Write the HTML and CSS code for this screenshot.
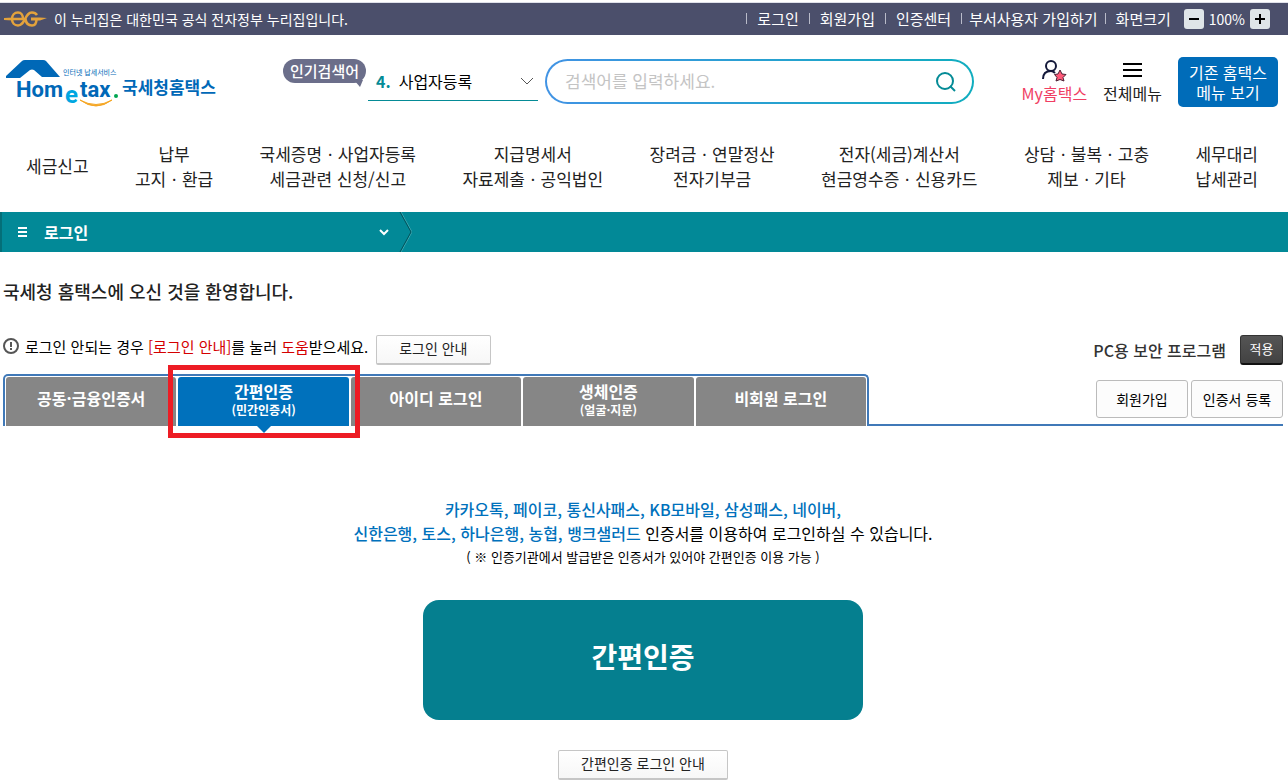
FILE: index.html
```html
<!DOCTYPE html>
<html lang="ko">
<head>
<meta charset="utf-8">
<title>국세청 홈택스</title>
<link rel="stylesheet" href="styles.css">
</head>
<body>
<div class="gov-bar">
  <p class="gov-note">
    <svg class="gov-mark" width="43" height="18" viewBox="0 0 43 18" fill="none" stroke="#e3a23c" stroke-width="2.5" aria-hidden="true">
      <path d="M8 9H19C19 5 17 2.500 14 2.500C10.500 2.500 8 5 8 9C8 13 10.500 15.500 14 15.500C17.500 15.500 19 13 21 9C23 5 24.500 2.500 28 2.500C30.500 2.500 32 3.500 33 5M21.500 9C22 13 24 15.500 28 15.500C31 15.500 32.500 13.500 32.500 9"/>
      <path d="M0 8L9 7.500V10.500L0 10ZM27 7.500H36L43 8L36 10.500H27Z" fill="#e3a23c" stroke="none"/>
    </svg>
    이 누리집은 대한민국 공식 전자정부 누리집입니다.
  </p>
  <nav class="util">
    <a href="#">로그인</a><a href="#">회원가입</a><a href="#">인증센터</a><a href="#" class="tight">부서사용자 가입하기</a><span class="util-label">화면크기</span>
    <button class="zoom-btn" type="button" aria-label="축소"><svg width="20" height="20" viewBox="0 0 20 20" stroke="#000" stroke-width="2"><path d="M5 10H15"/></svg></button>
    <span class="zoom-val">100%</span>
    <button class="zoom-btn" type="button" aria-label="확대"><svg width="20" height="20" viewBox="0 0 20 20" stroke="#000" stroke-width="2"><path d="M5 10H15M10 5V15"/></svg></button>
  </nav>
</div>

<header class="header">
  <a class="logo" href="#" aria-label="Hometax 국세청홈택스">
    <svg width="214" height="54" viewBox="0 0 214 54">
      <path d="M0 23V21L16 6Q17 5 19 5H37Q39 5 40 6L54 22H36L28 15Q26 14 24 15L14 23Z" fill="#0068b7"/>
      <text class="logo-sub" x="57" y="20">인터넷 납세서비스</text>
      <text class="logo-word" x="10" y="42">Hom</text>
      <text class="logo-e" x="59" y="48">e</text>
      <text class="logo-word" x="74" y="42">tax</text>
      <circle cx="110" cy="41" r="2" fill="#00a651"/>
      <path d="M74 45Q90 57 106 45Q90 54 74 45Z" fill="#f5a623" stroke="#f5a623"/>
      <text class="logo-name" x="116" y="39">국세청홈택스</text>
    </svg>
  </a>
  <div class="search">
    <span class="badge">인기검색어
      <svg class="badge-tail" width="9" height="8" viewBox="0 0 9 8"><path d="M0 0H9L6 7Z" fill="#6b6e8a"/></svg>
    </span>
    <button class="keyword" type="button"><b>4.</b><span>사업자등록</span>
      <svg width="14" height="8" viewBox="0 0 14 8" fill="none" stroke="#555"><path d="M1 1L7 7L13 1"/></svg>
    </button>
    <form class="search-box">
      <input type="text" placeholder="검색어를 입력하세요." aria-label="검색어">
      <button type="button" aria-label="검색"><svg width="22" height="22" viewBox="0 0 22 22" fill="none" stroke="#048b96" stroke-width="2"><circle cx="10" cy="10" r="8"/><path d="M15 15L20 20"/></svg></button>
    </form>
  </div>
  <div class="quick">
    <a class="quick-link my" href="#">
      <svg width="28" height="22" viewBox="0 0 28 22"><g fill="none" stroke="#14193a" stroke-width="2"><circle cx="11" cy="6" r="5"/><path d="M3 19C3 14 6 11 11 11C13 11 14 12 15 13"/></g><path d="M20 10L22 14L26 14.500L23 17.500L24 21L20 19.500L16 21L17 17.500L14.500 14.500L18 14Z" fill="#ff5a78" stroke="#4a2034"/></svg>
      <span>My홈택스</span>
    </a>
    <a class="quick-link" href="#">
      <svg width="20" height="22" viewBox="0 0 20 22" stroke="#000" stroke-width="2"><path d="M0 4H19M0 10H19M0 16H19"/></svg>
      <span>전체메뉴</span>
    </a>
    <a class="old-menu" href="#">기존 홈택스<br>메뉴 보기</a>
  </div>
</header>

<nav class="gnb">
  <a href="#">세금신고</a>
  <a href="#">납부<br>고지ㆍ환급</a>
  <a href="#">국세증명ㆍ사업자등록<br>세금관련 신청/신고</a>
  <a href="#">지급명세서<br>자료제출ㆍ공익법인</a>
  <a href="#">장려금ㆍ연말정산<br>전자기부금</a>
  <a href="#">전자(세금)계산서<br>현금영수증ㆍ신용카드</a>
  <a href="#">상담ㆍ불복ㆍ고충<br>제보ㆍ기타</a>
  <a href="#">세무대리<br>납세관리</a>
</nav>

<div class="crumb">
  <button class="crumb-btn" type="button">
    <svg width="10" height="12" viewBox="0 0 10 12" stroke="#fff" stroke-width="2"><path d="M0 2H9M0 6H9M0 10H9"/></svg>
    <span>로그인</span>
    <svg width="10" height="8" viewBox="0 0 10 8" fill="none" stroke="#fff" stroke-width="2"><path d="M1 2L5 6L9 2"/></svg>
  </button>
  <svg width="14" height="40" viewBox="0 0 14 40" fill="none"><path d="M3 0L14 20L3 40" stroke="#3ea7b0"/><path d="M2 0L13 20L2 40" stroke="#04525a"/></svg>
</div>

<main class="main">
  <h1>국세청 홈택스에 오신 것을 환영합니다.</h1>
  <div class="notice">
    <svg class="notice-icon" width="18" height="18" viewBox="0 0 18 18" fill="none" stroke="#555" stroke-width="2"><circle cx="8" cy="9" r="7"/><path d="M8 5V10M8 11V13"/></svg>
    <p>로그인 안되는 경우 <em>[로그인 안내]</em>를 눌러 <em>도움</em>받으세요.</p>
    <button class="btn" type="button">로그인 안내</button>
    <div class="security"><strong>PC용 보안 프로그램</strong><button class="apply" type="button">적용</button></div>
  </div>

  <div class="tab-row">
    <div class="tabs" role="tablist">
      <button class="tab" role="tab" type="button">공동·금융인증서</button>
      <button class="tab two-line active" role="tab" type="button" aria-selected="true">간편인증<small>(민간인증서)</small></button>
      <button class="tab" role="tab" type="button">아이디 로그인</button>
      <button class="tab two-line" role="tab" type="button">생체인증<small>(얼굴·지문)</small></button>
      <button class="tab" role="tab" type="button">비회원 로그인</button>
    </div>
    <div class="tab-side">
      <button class="side-btn" type="button">회원가입</button>
      <button class="side-btn" type="button">인증서 등록</button>
    </div>
  </div>

  <section class="panel">
    <p class="desc"><b>카카오톡, 페이코, 통신사패스, KB모바일, 삼성패스, 네이버,<br>신한은행, 토스, 하나은행, 농협, 뱅크샐러드</b> 인증서를 이용하여 로그인하실 수 있습니다.</p>
    <p class="hint">( ※ 인증기관에서 발급받은 인증서가 있어야 간편인증 이용 가능 )</p>
    <button class="auth" type="button">간편인증</button>
    <button class="btn" type="button">간편인증 로그인 안내</button>
  </section>
</main>
</body>
</html>
```

FILE: styles.css
```css
* { box-sizing: border-box; }
body {
  margin: 0;
  padding-top: 2px;
  background: #fff;
  color: #000;
  font: 16px/24px "Noto Sans CJK KR", sans-serif;
}
a { color: inherit; text-decoration: none; }
p, h1 { margin: 0; }
button { font: inherit; color: inherit; padding: 0; border: 0; background: none; cursor: pointer; white-space: nowrap; }
svg { display: block; flex: none; }

.gov-bar {
  display: flex;
  align-items: center;
  justify-content: space-between;
  height: 33px;
  padding: 0 18px 1px 4px;
  border-top: 1px solid #dfe1ea;
  background: #4b4f6b;
  color: #fff;
}
.gov-note { display: flex; align-items: center; gap: 7px; font-size: 14px; white-space: nowrap; }
.util { display: flex; align-items: center; font-size: 15px; line-height: 20px; white-space: nowrap; }
.util a, .util-label { display: flex; align-items: center; padding-right: 10px; }
.util a::before, .util-label::before { content: ""; width: 1px; height: 11px; margin-right: 10px; background: #b9bbc9; }
.util .tight { padding-right: 7px; }
.util .tight::before { margin-right: 7px; }
.util .util-label { padding-right: 13px; }
.zoom-btn { border-radius: 3px; background: #dfe5e8; }
.zoom-val { padding: 0 5px; font-size: 14px; }

.header {
  display: flex;
  align-items: center;
  height: 92px;
  padding: 1px 10px 0 6px;
}
.logo { flex: none; }
.logo-sub { font-size: 7px; fill: #0068b7; }
.logo-word { font: bold 22px Roboto, sans-serif; fill: #0068b7; }
.logo-e { font: bold 24px Roboto, sans-serif; fill: #00a7e1; }
.logo-name { font-size: 17px; font-weight: 700; fill: #0068b7; }
.search { display: flex; flex: 1; align-items: center; margin-left: 63px; }
.badge {
  position: relative;
  flex: none;
  align-self: flex-start;
  padding: 0 7px;
  border-radius: 12px;
  background: #6b6e8a;
  color: #fff;
  font-size: 15px;
  font-weight: 500;
}
.badge-tail { position: absolute; right: 3px; top: 21px; }
.keyword {
  display: flex;
  flex: none;
  align-items: center;
  gap: 8px;
  width: 170px;
  height: 38px;
  margin: 0 7px 0 2px;
  padding: 0 4px 0 8px;
  border-bottom: 1px solid #048b96;
}
.keyword b { color: #048b96; }
.keyword svg { margin-left: auto; }
.search-box {
  display: flex;
  flex: 1;
  align-items: center;
  height: 45px;
  padding: 0 15px 0 18px;
  border: 2px solid transparent;
  border-radius: 23px;
  background: linear-gradient(#fff, #fff) padding-box, linear-gradient(90deg, #4193e4, #10adbf) border-box;
}
.search-box input { flex: 1; min-width: 0; padding: 0 0 2px; border: 0; outline: 0; background: none; font: inherit; font-size: 17px; }
.search-box input::placeholder { color: #c4c4c4; opacity: 1; }
.quick { display: flex; flex: none; align-items: center; gap: 16px; margin-left: 48px; }
.quick-link { display: flex; flex-direction: column; align-items: center; color: #222; line-height: 22px; }
.my { color: #f03e63; }
.old-menu { width: 100px; padding: 5px 0; border-radius: 5px; background: #006cb9; color: #fff; line-height: 20px; text-align: center; }

.gnb {
  display: flex;
  align-items: center;
  justify-content: space-between;
  height: 85px;
  padding: 0 30px 8px 26px;
  color: #222;
  font-size: 17px;
  line-height: 25px;
  text-align: center;
  white-space: nowrap;
}

.crumb { display: flex; height: 40px; border-left: 2px solid #046f78; background: #028997; color: #fff; }
.crumb-btn { display: flex; align-items: center; gap: 16px; width: 396px; padding: 0 9px 1px 16px; font-weight: 700; }
.crumb-btn svg:last-child { margin-left: auto; }

.main { padding: 25px 5px 0 3px; }
h1 { color: #222; font-size: 18px; font-weight: 500; line-height: 28px; }
.notice { display: flex; align-items: flex-start; margin-top: 30px; }
.notice-icon { margin-top: 2px; }
.notice p { flex: none; margin: 0 8px 0 4px; font-size: 15px; line-height: 24px; }
.notice em { color: #d40000; font-style: normal; }
.btn {
  height: 30px;
  padding: 0 22px 3px;
  border: 1px solid #c6c6c6;
  border-bottom-width: 2px;
  border-radius: 2px;
  background: linear-gradient(#fff, #f7f7f7);
  color: #222;
  font-size: 14px;
}
.security { display: flex; align-items: center; gap: 14px; margin-left: auto; color: #333; }
.security strong { font-weight: 500; }
.apply {
  width: 43px;
  height: 30px;
  padding-bottom: 2px;
  border: 1px solid #333;
  border-bottom: 2px solid #111;
  border-radius: 3px;
  background: linear-gradient(#555, #424242);
  color: #fff;
  font-size: 13px;
}

.tab-row { display: flex; margin-top: 9px; }
.tabs {
  display: grid;
  grid-template-columns: repeat(5, 1fr);
  gap: 2px;
  flex: 0 1 866px;
  height: 52px;
  padding: 1px 1px 0;
  border: 2px solid #4079b8;
  border-bottom: 0;
  border-radius: 5px 5px 0 0;
}
.tab {
  display: flex;
  flex-direction: column;
  align-items: center;
  justify-content: center;
  padding-bottom: 7px;
  border-radius: 3px 3px 0 0;
  background: #868686;
  color: #fff;
  font-weight: 700;
  line-height: 20px;
}
.two-line { padding-bottom: 3px; }
.tab small { font-size: 12px; line-height: 18px; }
.active { position: relative; background: #0071bc; }
.active::before { content: ""; position: absolute; inset: -12px -11px -12px -10px; border: 5px solid #ed1c24; }
.active::after { content: ""; position: absolute; top: 100%; left: 50%; margin-left: -7px; border: 7px solid transparent; border-top-color: #0071bc; border-bottom: 0; }
.tab-side {
  display: flex;
  flex: 1;
  justify-content: flex-end;
  align-items: flex-start;
  gap: 3px;
  padding-top: 6px;
  border-bottom: 2px solid #4079b8;
}
.side-btn { width: 92px; height: 38px; border: 1px solid #bbb; border-radius: 3px; background: #fcfcfc; font-size: 14px; }

.panel { display: flex; flex-direction: column; align-items: center; padding-top: 71px; text-align: center; }
.desc b { color: #0071bc; font-weight: 500; }
.hint { font-size: 13px; }
.auth { width: 440px; height: 120px; margin: 31px 0 30px; padding-bottom: 8px; border-radius: 16px; background: #057f8f; color: #fff; font-size: 28px; font-weight: 700; }
```
